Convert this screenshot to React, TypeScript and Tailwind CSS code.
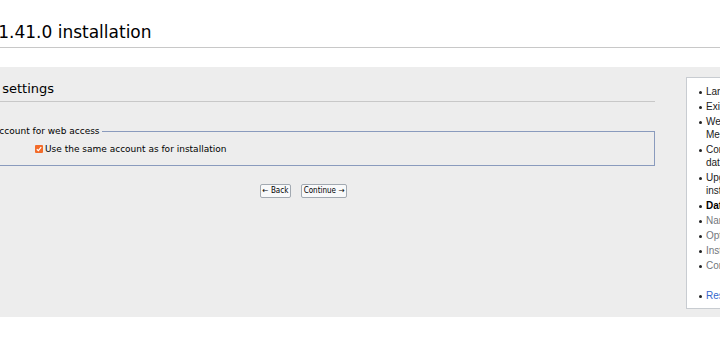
import React from "react";

const steps: { label: string; state: "done" | "current" | "todo" }[] = [
  { label: "Language", state: "done" },
  { label: "Existing wiki", state: "done" },
  { label: "Welcome to MediaWiki!", state: "done" },
  { label: "Connect to database", state: "done" },
  { label: "Upgrade existing installation", state: "done" },
  { label: "Database settings", state: "current" },
  { label: "Name", state: "todo" },
  { label: "Options", state: "todo" },
  { label: "Install", state: "todo" },
  { label: "Complete!", state: "todo" },
];

function Bullet({ children, className }: { children: React.ReactNode; className?: string }) {
  return (
    <li className="flex items-start mb-[2px]">
      <span className="w-[3px] h-[3px] rounded-full bg-[#202122] mt-[6px] mr-[4px] shrink-0" />
      <span className={"w-[90px] " + (className ?? "")}>{children}</span>
    </li>
  );
}

export default function App() {
  return (
    <div className="w-[720px] h-[340px] overflow-hidden bg-white text-[#202122] font-['DejaVu_Sans',sans-serif]">
      <div className="-ml-[100px] w-[1000px]">
        <h1 className="pl-[6px] pt-[22px] pb-[5px] text-[17px] leading-[20px] font-normal text-black border-b border-[#c8c8c8]">
          MediaWiki 1.41.0 installation
        </h1>
        <div className="mt-[19px] h-[250px] bg-[#ededed] flex items-start pt-[10px] pl-[36px]">
          <div className="w-[718.5px] mt-[4px] shrink-0">
            <h2 className="text-[13px] leading-[16px] pb-[4px] font-normal text-black border-b border-[#c8c8c8]">
              Database settings
            </h2>
            <fieldset className="mt-[24px] border border-[#8a9bbd] pb-[10px]">
              <legend className="ml-[9px] px-[2px] text-[9px] leading-[11px] text-black">
                Database account for web access
              </legend>
              <label className="mt-[6px] pl-[98px] flex items-center text-[9px] leading-[12px] text-black">
                <span className="w-[8px] h-[8px] rounded-[1px] bg-[#f26b2a] flex items-center justify-center mr-[2px]">
                  <svg width="6" height="6" viewBox="0 0 6 6">
                    <path d="M0.8 3.2 L2.4 4.7 L5.2 1.2" stroke="white" strokeWidth="1.2" fill="none" />
                  </svg>
                </span>
                Use the same account as for installation
              </label>
            </fieldset>
            <div className="mt-[18px] pl-[324px] flex gap-[10px] font-['DejaVu_Sans_Condensed','DejaVu_Sans',sans-serif] text-[8px] text-black">
              <button className="w-[31px] h-[14px] flex items-center justify-center border border-[#a2a9b1] rounded-[2px] bg-[#f8f9fa] leading-none whitespace-nowrap">
                ← Back
              </button>
              <button className="w-[46px] h-[14px] flex items-center justify-center border border-[#a2a9b1] rounded-[2px] bg-[#f8f9fa] leading-none whitespace-nowrap">
                Continue →
              </button>
            </div>
          </div>
          <div className="ml-[31.5px] w-[130px] h-[232px] shrink-0 bg-white border border-[#c8ccd1] pt-[7px] pl-[12px] font-['Liberation_Sans',sans-serif] text-[10px] leading-[13px]">
            <ul>
              {steps.map((s) => (
                <Bullet
                  key={s.label}
                  className={
                    s.state === "current"
                      ? "font-bold text-black"
                      : s.state === "todo"
                      ? "text-[#72777d]"
                      : "text-[#202122]"
                  }
                >
                  {s.label}
                </Bullet>
              ))}
            </ul>
            <ul className="mt-[17px]">
              <Bullet className="text-[#3366cc]">Restart installation</Bullet>
            </ul>
          </div>
        </div>
      </div>
    </div>
  );
}
